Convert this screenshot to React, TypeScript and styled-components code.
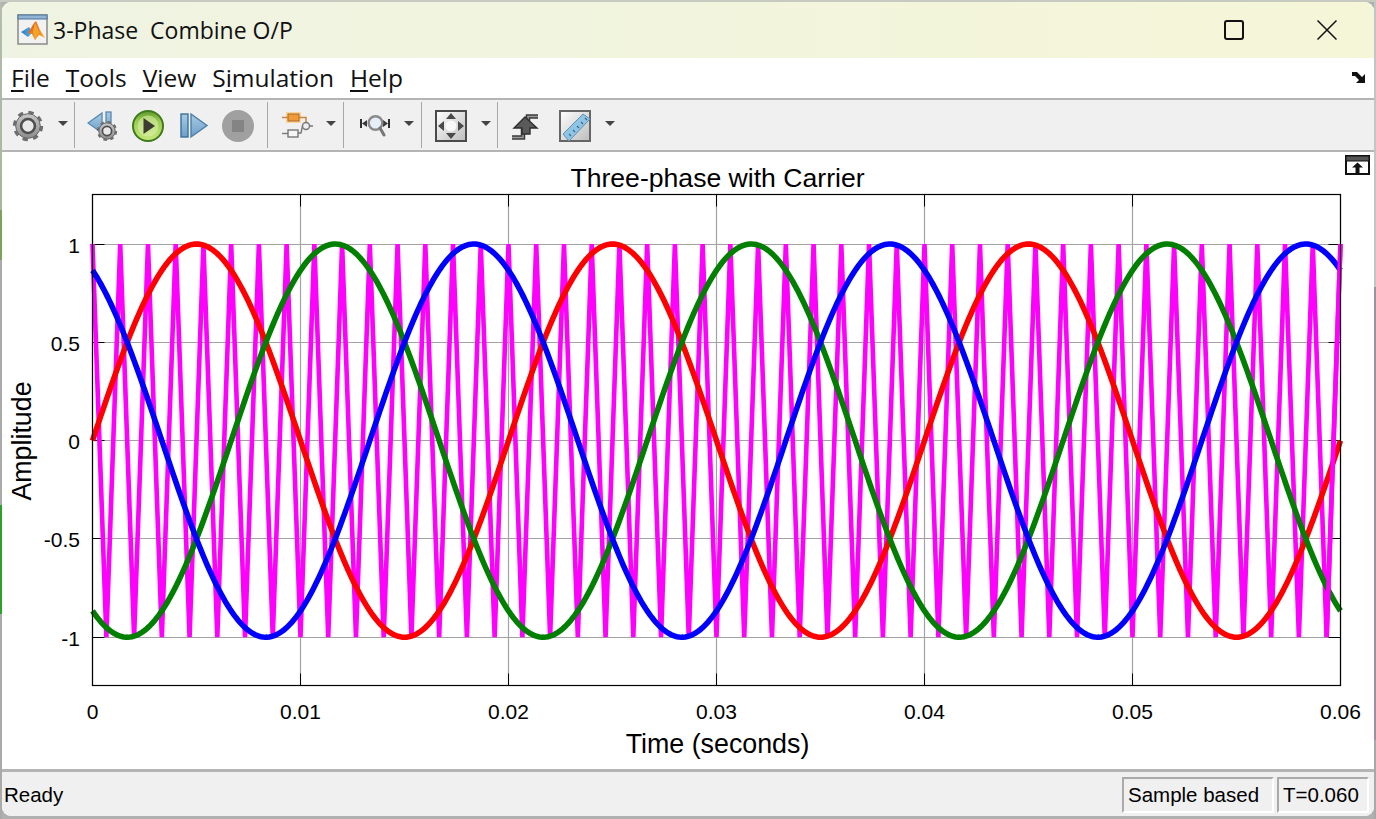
import React from "react";
import styled, { createGlobalStyle } from "styled-components";

const Global = createGlobalStyle`
  html, body { margin: 0; height: 100%; overflow: hidden; }
  body {
    background-color: #b0b0b0;
    background-image:
      linear-gradient(#c6cac0, #c6cac0),
      linear-gradient(to bottom, #b4bcae 0, #a9b5a0 210px, #80a060 210px, #80a060 260px, #aaaaaa 260px, #aaaaaa 505px, #2ca02c 505px, #2ca02c 614px, #aaaaaa 614px),
      linear-gradient(to bottom, #c4c4c4 0, #c4c4c4 287px, #a08fa2 287px, #a08fa2 740px, #a8a8a8 740px);
    background-size: 100% 2px, 2px 100%, 2px 100%;
    background-position: left top, left top, right top;
    background-repeat: no-repeat;
  }
  #root { height: 100%; }
`;

const Screen = styled.div`
  height: 100%;
  box-sizing: border-box;
  padding: 2px 2px 3px;
`;

const Window = styled.div`
  height: 100%;
  display: flex;
  flex-direction: column;
  border-radius: 9px;
  overflow: hidden;
  background: #ffffff;
`;

const TitleBar = styled.div`
  height: 56px;
  flex: none;
  display: flex;
  align-items: center;
  padding-left: 14px;
  background: linear-gradient(to right, #eff3e2, #f5f6d8);
`;

const TitleText = styled.span`
  margin-left: 5px;
  font: 23px "Open Sans", "Noto Sans", sans-serif;
  color: #111;
  white-space: pre;
`;

const WindowControls = styled.div`
  margin-left: auto;
  display: flex;
  align-items: center;
  gap: 73px;
  padding-right: 37px;
`;

const MaxBox = styled.div`
  width: 20px;
  height: 20px;
  box-sizing: border-box;
  border: 2px solid #111;
  border-radius: 3px;
`;

const MenuBar = styled.div`
  height: 42px;
  flex: none;
  display: flex;
  align-items: center;
  gap: 16px;
  padding: 0 7px 2px 9px;
  box-sizing: border-box;
  border-bottom: 2px solid #b4b4b4;
  background: #fff;
`;

const MenuItem = styled.span`
  font: 24.5px "Open Sans", "Noto Sans", sans-serif;
  color: #111;
  u { text-underline-offset: 3px; text-decoration-thickness: 2px; }
`;

const MenuArrow = styled.svg`
  margin-left: auto;
  width: 16px;
  height: 14px;
`;

const Toolbar = styled.div`
  height: 52px;
  flex: none;
  display: flex;
  align-items: center;
  box-sizing: border-box;
  border-bottom: 2px solid #b4b4b4;
  background: #f0f0f0;
`;

const ToolGroup = styled.div<{ $w?: number; $pad: number; $last?: boolean }>`
  width: ${(p) => (p.$w ? `${p.$w}px` : "auto")};
  height: 46px;
  box-sizing: border-box;
  display: flex;
  align-items: center;
  gap: 13px;
  padding-left: ${(p) => p.$pad}px;
  padding-top: 1px;
  border-right: ${(p) => (p.$last ? "none" : "1px solid #a8a8a8")};
`;

const Icon = styled.svg`
  width: 32px;
  height: 32px;
  flex: none;
  filter: blur(0.35px);
`;

const Caret = styled.span<{ $ml?: number }>`
  width: 0;
  height: 0;
  flex: none;
  margin-left: ${(p) => p.$ml ?? 0}px;
  margin-top: -4px;
  border-left: 5px solid transparent;
  border-right: 5px solid transparent;
  border-top: 5px solid #444;
`;

const ChartArea = styled.div`
  flex: 1;
  min-height: 0;
  position: relative;
  background: #fff;
`;

const ChartSvg = styled.svg`
  display: block;
  width: 1372px;
  height: 617px;
`;

const UndockIcon = styled.svg`
  position: absolute;
  top: 3px;
  right: 4px;
  width: 25px;
  height: 20px;
`;

const StatusBar = styled.div`
  height: 47px;
  flex: none;
  box-sizing: border-box;
  display: flex;
  align-items: center;
  gap: 3px;
  padding: 2px 5px 0 2px;
  border-top: 3px solid #b4b4b4;
  background: #f0f0f0;
  font: 20.5px "Liberation Sans", Arial, sans-serif;
  color: #000;
`;

const Ready = styled.span`
  margin-right: auto;
`;

const StatusCell = styled.div<{ $w: number }>`
  width: ${(p) => p.$w}px;
  height: 36px;
  box-sizing: border-box;
  display: flex;
  align-items: center;
  padding-left: 4px;
  border: 2px solid;
  border-color: #aaaaaa #ffffff #ffffff #aaaaaa;
`;

const GearShape = ({ cx, cy, r }: { cx: number; cy: number; r: number }) => {
  const c = 2 * Math.PI * r * 0.88;
  return (
    <g>
      <circle cx={cx} cy={cy} r={r * 0.88} fill="none" stroke="#6e6e6e" strokeWidth={r * 0.26} strokeDasharray={`${c / 16} ${c / 16}`} />
      <circle cx={cx} cy={cy} r={r * 0.82} fill="url(#gearFill)" stroke="#666" strokeWidth="1" />
      <circle cx={cx} cy={cy} r={r * 0.46} fill="#e8e8e8" stroke="#4e4e4e" strokeWidth={r * 0.17} />
    </g>
  );
};

const IconDefs = () => (
  <svg width="0" height="0" style={{ position: "absolute" }}>
    <defs>
      <linearGradient id="gearFill" x1="0" y1="0" x2="0" y2="1">
        <stop offset="0" stopColor="#c8c8c8" />
        <stop offset="1" stopColor="#8c8c8c" />
      </linearGradient>
      <linearGradient id="playFill" x1="0" y1="0" x2="0" y2="1">
        <stop offset="0" stopColor="#5f9a2c" />
        <stop offset="0.35" stopColor="#9ccb52" />
        <stop offset="1" stopColor="#c8ea7c" />
      </linearGradient>
      <linearGradient id="blueFill" x1="0" y1="0" x2="0" y2="1">
        <stop offset="0" stopColor="#a8cbe4" />
        <stop offset="1" stopColor="#6b9fc8" />
      </linearGradient>
      <linearGradient id="boxFill" x1="0" y1="0" x2="1" y2="1">
        <stop offset="0" stopColor="#ffffff" />
        <stop offset="1" stopColor="#bdbdbd" />
      </linearGradient>
      <linearGradient id="memL" x1="0" y1="0" x2="1" y2="0">
        <stop offset="0" stopColor="#2f7fc4" />
        <stop offset="1" stopColor="#5fb0de" />
      </linearGradient>
      <linearGradient id="memR" x1="0" y1="0" x2="1" y2="1">
        <stop offset="0" stopColor="#e8491c" />
        <stop offset="1" stopColor="#f6b92e" />
      </linearGradient>
    </defs>
  </svg>
);

const MatlabLogo = () => (
  <svg width="32" height="32" viewBox="0 0 32 32" style={{ flex: "none" }}>
    <rect x="2" y="1" width="29" height="29" fill="#f2f2f2" stroke="#8b8b8b" strokeWidth="1.5" />
    <rect x="2" y="1" width="29" height="4" fill="#8fb4d6" stroke="#4f7596" strokeWidth="1" />
    <path d="M5 18 L13 13 L17 18 L12 23 Z" fill="url(#memL)" />
    <path d="M12 19 L15 14 L18 9 L20 7 L24 16 L29 24 L23 21 L19 26 L16 20 Z" fill="url(#memR)" />
    <path d="M19 8 L23 18 L19 26 L17 18 Z" fill="#f3a52a" />
  </svg>
);

const SIGNAL = {
  left: 92.5,
  right: 1340.5,
  top: 194.5,
  bottom: 685.5,
  zero: 440.6,
  unit: 196.6,
};
const xOf = (t: number) => SIGNAL.left + (t / 0.06) * (SIGNAL.right - SIGNAL.left);
const yOf = (v: number) => SIGNAL.zero - v * SIGNAL.unit;
const gridY = (v: number) => Math.floor(yOf(v)) + 0.5;
const gridX = (t: number) => Math.floor(xOf(t) + 0.01) + 0.5;

const sinePath = (phase: number) => {
  const pts: string[] = [];
  for (let i = 0; i <= 600; i++) {
    const t = (i / 600) * 0.06;
    pts.push(`${xOf(t).toFixed(2)},${yOf(Math.sin(2 * Math.PI * 50 * t + phase)).toFixed(2)}`);
  }
  return pts.join(" ");
};

const carrierPath = () => {
  const pts: string[] = [];
  for (let i = 0; i <= 90; i++) {
    const t = (i / 90) * 0.06;
    pts.push(`${xOf(t).toFixed(2)},${yOf(i % 2 === 0 ? 1 : -1).toFixed(2)}`);
  }
  return pts.join(" ");
};

const yTicks: [number, string][] = [[1, "1"], [0.5, "0.5"], [0, "0"], [-0.5, "-0.5"], [-1, "-1"]];
const xTicks: [number, string][] = [[0, "0"], [0.01, "0.01"], [0.02, "0.02"], [0.03, "0.03"], [0.04, "0.04"], [0.05, "0.05"], [0.06, "0.06"]];

const Chart = () => {
  const { left, right, top, bottom } = SIGNAL;
  const font = '"Liberation Sans", Arial, sans-serif';
  return (
    <ChartSvg viewBox="2 152 1372 617">
      {yTicks.map(([v]) => (
        <line key={v} x1={left} x2={right} y1={gridY(v)} y2={gridY(v)} stroke="#a2a2a2" strokeWidth="1.2" />
      ))}
      {xTicks.map(([t]) => (
        <line key={t} y1={top} y2={bottom} x1={gridX(t)} x2={gridX(t)} stroke="#a2a2a2" strokeWidth="1.2" />
      ))}
      {yTicks.map(([v]) => {
        const y = gridY(v);
        return (
          <g key={v} stroke="#000" strokeWidth="1">
            <line x1={left} x2={left + 12} y1={y} y2={y} />
            <line x1={right - 12} x2={right} y1={y} y2={y} />
          </g>
        );
      })}
      {xTicks.map(([t]) => {
        const x = gridX(t);
        return (
          <g key={t} stroke="#000" strokeWidth="1">
            <line x1={x} x2={x} y1={top} y2={top + 12} />
            <line x1={x} x2={x} y1={bottom - 12} y2={bottom} />
          </g>
        );
      })}
      <polyline points={carrierPath()} fill="none" stroke="#ff00ff" strokeWidth="4.6" strokeLinejoin="bevel" />
      <polyline points={sinePath(0)} fill="none" stroke="#ff0000" strokeWidth="5.6" />
      <polyline points={sinePath((-2 * Math.PI) / 3)} fill="none" stroke="#007f00" strokeWidth="5.6" />
      <polyline points={sinePath((2 * Math.PI) / 3)} fill="none" stroke="#0000ff" strokeWidth="5.6" />
      <line x1={xOf(0.0593333)} y1={yOf(-1)} x2={right} y2={yOf(1)} stroke="#ff00ff" strokeWidth="4.6" />
      <rect x={left} y={top} width={right - left} height={bottom - top} fill="none" stroke="#000" strokeWidth="1.2" />
      <g fontFamily={font} fill="#000">
        {yTicks.map(([v, s]) => (
          <text key={v} x="80" y={yOf(v) + 8.5} fontSize="21" textAnchor="end">{s}</text>
        ))}
        {xTicks.map(([t, s]) => (
          <text key={t} x={xOf(t)} y="719" fontSize="21" textAnchor="middle">{s}</text>
        ))}
        <text x="717.5" y="187" fontSize="26.6" textAnchor="middle">Three-phase with Carrier</text>
        <text x="717.5" y="753" fontSize="26.8" textAnchor="middle">Time (seconds)</text>
        <text transform="translate(31 441) rotate(-90)" fontSize="26.8" textAnchor="middle">Amplitude</text>
      </g>
    </ChartSvg>
  );
};

export default function App() {
  return (
    <>
      <Global />
      <IconDefs />
      <Screen>
        <Window>
          <TitleBar>
            <MatlabLogo />
            <TitleText>3-Phase  Combine O/P</TitleText>
            <WindowControls>
              <MaxBox />
              <svg width="20" height="20" viewBox="0 0 20 20">
                <path d="M0.5 0.5 L19.5 19.5 M19.5 0.5 L0.5 19.5" stroke="#111" strokeWidth="1.5" />
              </svg>
            </WindowControls>
          </TitleBar>
          <MenuBar>
            <MenuItem><u>F</u>ile</MenuItem>
            <MenuItem><u>T</u>ools</MenuItem>
            <MenuItem><u>V</u>iew</MenuItem>
            <MenuItem>S<u>i</u>mulation</MenuItem>
            <MenuItem><u>H</u>elp</MenuItem>
            <MenuArrow viewBox="0 0 16 14">
              <path d="M1 2 H6 L11 7 L14 4 V13 H5 L8 10 L4 6 H1 Z" fill="#111" />
            </MenuArrow>
          </MenuBar>
          <Toolbar>
            <ToolGroup $w={73} $pad={10}>
              <Icon viewBox="0 0 32 32"><GearShape cx={16} cy={16} r={15} /></Icon>
              <Caret $ml={1} />
            </ToolGroup>
            <ToolGroup $w={193} $pad={12}>
              <Icon viewBox="0 0 32 32">
                <path d="M1 13 L15 3 V23 Z" fill="url(#blueFill)" stroke="#5b88ad" strokeWidth="1.3" />
                <rect x="19" y="2" width="5" height="20" fill="url(#blueFill)" stroke="#5b88ad" strokeWidth="1.3" />
                <GearShape cx={20} cy={21} r={10} />
              </Icon>
              <Icon viewBox="0 0 32 32">
                <circle cx="16" cy="16" r="15" fill="url(#playFill)" stroke="#3f7a1c" strokeWidth="2" />
                <circle cx="16" cy="16" r="10.5" fill="#dff2b0" opacity="0.55" />
                <path d="M11.5 8 L23 16 L11.5 24 Z" fill="#3c3c30" />
              </Icon>
              <Icon viewBox="0 0 32 32">
                <rect x="4" y="4" width="7" height="23" fill="url(#blueFill)" stroke="#3e6f99" strokeWidth="1.4" />
                <path d="M14 4 L30 15.5 L14 27 Z" fill="url(#blueFill)" stroke="#4b7ea8" strokeWidth="1.4" />
              </Icon>
              <Icon viewBox="0 0 32 32">
                <circle cx="16" cy="16" r="16" fill="#a0a0a0" />
                <rect x="10" y="10" width="12" height="12" rx="1" fill="#848484" />
              </Icon>
            </ToolGroup>
            <ToolGroup $w={76} $pad={13}>
              <Icon viewBox="0 0 32 32">
                <rect x="5" y="2" width="15" height="11" fill="#fbd49a" />
                <rect x="7" y="4" width="11" height="7" fill="#f09a3a" stroke="#a86a28" />
                <path d="M1 7.5 H7 M18 7.5 H25 V13" fill="none" stroke="#c98440" strokeWidth="1.5" />
                <circle cx="25" cy="16" r="3.5" fill="#eee" stroke="#777" strokeWidth="1.4" />
                <path d="M29 16 H32 M21.5 16 L20 23 H17" fill="none" stroke="#777" strokeWidth="1.4" />
                <rect x="7" y="20" width="10" height="7" fill="#f6f6f6" stroke="#777" strokeWidth="1.4" />
                <path d="M1 23.5 H7" stroke="#777" strokeWidth="1.4" />
              </Icon>
              <Caret />
            </ToolGroup>
            <ToolGroup $w={78} $pad={15}>
              <Icon viewBox="0 0 32 32">
                <path d="M2 9 V18 M30 9 V18" stroke="#2e2e2e" strokeWidth="2" />
                <path d="M3 13.5 L8 10 V17 Z M29 13.5 L24 10 V17 Z" fill="#3a3a3a" />
                <circle cx="16.5" cy="13" r="6.8" fill="#e6eff5" stroke="#8a8a8a" strokeWidth="2.4" />
                <path d="M21 18 L25 25" stroke="#777" strokeWidth="3" strokeLinecap="round" />
              </Icon>
              <Caret />
            </ToolGroup>
            <ToolGroup $w={76} $pad={13}>
              <Icon viewBox="0 0 32 32">
                <rect x="1" y="1" width="30" height="30" fill="url(#boxFill)" stroke="#4a4a4a" strokeWidth="2" />
                <path d="M16 3 L21 9 H11 Z M16 29 L21 23 H11 Z M3 16 L9 11 V21 Z M29 16 L23 11 V21 Z" fill="#4a4a4a" />
                <circle cx="16" cy="16" r="5.5" fill="#f8f8f8" />
              </Icon>
              <Caret $ml={1} />
            </ToolGroup>
            <ToolGroup $pad={11} $last>
              <Icon viewBox="0 0 32 32">
                <path d="M3 27.5 H14 V18 M19 18 V6.5 H29" fill="none" stroke="#3a3a3a" strokeWidth="4.5" />
                <path d="M3 27.5 H14 V18 M19 18 V6.5 H29" fill="none" stroke="#9a9a9a" strokeWidth="1.5" />
                <path d="M16 7 L28 18 H21 V24 H13 V18 H5 Z" fill="#5a5a5a" stroke="#2e2e2e" strokeWidth="1.4" />
              </Icon>
              <Icon viewBox="0 0 32 32" style={{ marginLeft: 5 }}>
                <rect x="1" y="1" width="30" height="30" fill="url(#boxFill)" stroke="#666" strokeWidth="2" />
                <path d="M4 24 L24 4 L31 9 L10 31 Z" fill="#90c4e4" stroke="#5e93b4" strokeWidth="1" />
                <path d="M10 24 L12 26 M14 20 L16 22 M18 16 L20 18 M22 12 L24 14 M26 8 L28 10" stroke="#3a6a88" strokeWidth="1.2" />
              </Icon>
              <Caret $ml={1} />
            </ToolGroup>
          </Toolbar>
          <ChartArea>
            <Chart />
            <UndockIcon viewBox="0 0 25 20">
              <rect x="1" y="1" width="23" height="18" fill="#fff" stroke="#111" strokeWidth="2" />
              <rect x="1" y="1" width="23" height="5" fill="#555" stroke="#111" strokeWidth="1" />
              <path d="M12.5 7.5 L18 12.5 H14.5 V18 H10.5 V12.5 H7 Z" fill="#111" />
            </UndockIcon>
          </ChartArea>
          <StatusBar>
            <Ready>Ready</Ready>
            <StatusCell $w={152}>Sample based</StatusCell>
            <StatusCell $w={92}>T=0.060</StatusCell>
          </StatusBar>
        </Window>
      </Screen>
    </>
  );
}
